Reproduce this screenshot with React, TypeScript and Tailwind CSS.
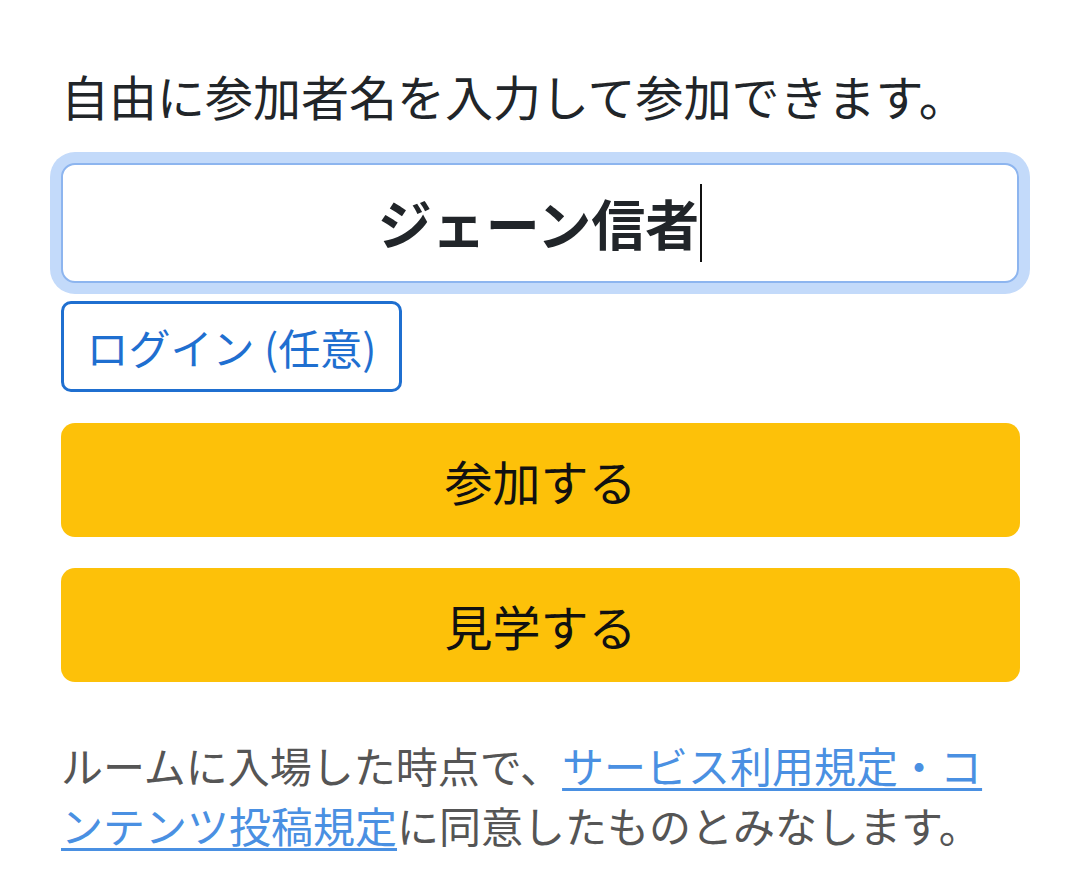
import React from "react";

export default function App() {
  const font = { fontFamily: '"Noto Sans CJK JP", "Noto Sans", sans-serif' };
  return (
    <div className="min-h-[883px] w-[1080px] bg-white" style={font}>
      <div className="flex flex-col px-[61px] pt-[59px]">
        <p className="text-[48px] leading-[72px] text-[#212529]">
          自由に参加者名を入力して参加できます。
        </p>
        <div className="mt-[32px] flex h-[120px] w-[958px] items-center justify-center rounded-[14px] border-2 border-[#8db5ef] bg-white shadow-[0_0_0_11px_#c3dafa]">
          <span className="text-[54px] font-bold leading-none text-[#212529]">ジェーン信者</span>
          <span className="ml-[1px] h-[78px] w-[2px] bg-[#111]" />
        </div>
        <div className="mt-[18px] flex">
          <div className="flex h-[91px] w-[341px] items-center justify-center rounded-[10px] border-[3px] border-[#1f6fd0] text-[42px] leading-none text-[#1f6fd0]">
            ログイン (任意)
          </div>
        </div>
        <div className="mt-[31px] flex h-[114px] w-[959px] items-center justify-center rounded-[14px] bg-[#fdc109] text-[48px] text-[#111]">
          参加する
        </div>
        <div className="mt-[31px] flex h-[114px] w-[959px] items-center justify-center rounded-[14px] bg-[#fdc109] text-[48px] text-[#111]">
          見学する
        </div>
        <p className="mt-[53px] w-[958px] text-[42px] leading-[60px] text-[#555]">
          ルームに入場した時点で、
          <a className="text-[#4a90e2] underline decoration-[3px] underline-offset-[5px]">
            サービス利用規定・コンテンツ投稿規定
          </a>
          に同意したものとみなします。
        </p>
      </div>
    </div>
  );
}
